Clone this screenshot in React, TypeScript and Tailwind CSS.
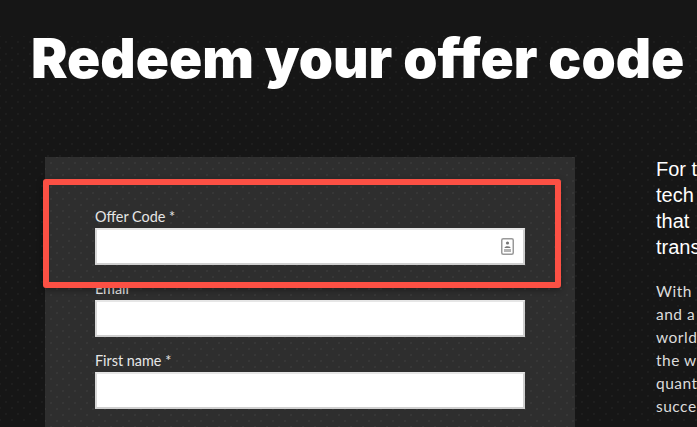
import React from 'react';

const dotted = "bg-[radial-gradient(circle,rgba(255,255,255,0.06)_0.5px,transparent_1px),radial-gradient(circle,rgba(255,255,255,0.06)_0.5px,transparent_1px)] bg-[size:12px_12px] bg-[position:0_0,6px_6px]";
const dottedCard = "bg-[radial-gradient(circle,rgba(255,255,255,0.07)_0.5px,transparent_1px),radial-gradient(circle,rgba(255,255,255,0.07)_0.5px,transparent_1px)] bg-[size:12px_12px] bg-[position:0_0,6px_6px]";

const Field = ({ label, icon }: { label: string; icon?: boolean }) => (
  <div className="mb-[13px]">
    <label className="block h-[22px] text-[14.4px] leading-[22px] text-[#e6e6e6] font-['Lato',sans-serif]">{label}</label>
    <div className="h-[37px] bg-white border-2 border-[#cfcfcf] border-t-[#e6e6e6] border-l-[#d8d8d8] flex items-center justify-end pr-[9px]">
      {icon && (
        <svg width="13" height="17" viewBox="0 0 13 17" fill="none">
          <rect x="0.75" y="0.75" width="11.5" height="15.5" rx="1.5" stroke="#999999" strokeWidth="1.5" />
          <circle cx="6.5" cy="5" r="1.6" fill="#777777" />
          <path d="M3.5 10 C3.5 7.6 9.5 7.6 9.5 10 Z" fill="#777777" />
          <rect x="3" y="11" width="7" height="3" fill="#b4b4b4" />
        </svg>
      )}
    </div>
  </div>
);

const App: React.FC = () => {
  return (
    <div className="relative h-[427px] w-[697px] overflow-hidden bg-[#161616] pt-10">
      <div className={`h-full ${dotted}`}>
        <h1 className="-mt-1 pt-[2px] pl-[31px] text-[54.8px] leading-[40px] font-black text-white whitespace-nowrap font-['Inter',sans-serif]">
          Redeem your offer code
        </h1>
        <div className="flex mt-[79px]">
          {/* Form card */}
          <div className={`ml-[45px] w-[530px] h-[300px] shrink-0 bg-[#2e2e2e] px-[50px] pt-[49px] ${dottedCard}`}>
            <Field label="Offer Code *" icon />
            <Field label="Email" />
            <Field label="First name *" />
          </div>
          {/* Right copy, cut by the window */}
          <div className="ml-[81px] -mt-[1px] shrink-0 whitespace-nowrap">
            <p className="text-[20px] leading-[26px] text-white font-['Liberation_Sans',sans-serif]">
              For t<br />tech<br />that<br />trans
            </p>
            <p className="mt-[20px] text-[15.5px] leading-[23px] tracking-[0.5px] text-[#dcdcdc] font-['Lato',sans-serif]">
              With l<br />and a<br />world<br />the w<br />quant<br />succe
            </p>
          </div>
        </div>
      </div>
      {/* Highlight rectangle over the first field */}
      <div className="absolute left-[43px] top-[179px] w-[518px] h-[109px] border-[6px] border-[#fc5044] rounded-[3px] shadow-[0_2px_6px_rgba(0,0,0,0.35)]" />
    </div>
  );
};

export default App;
